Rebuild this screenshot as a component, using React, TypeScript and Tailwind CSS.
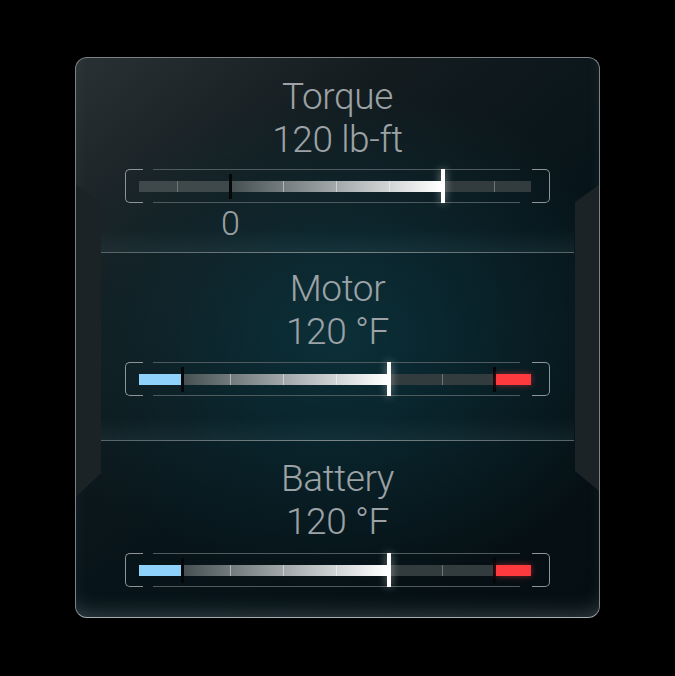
import React from 'react';

type Gauge = {
  title: string;
  reading: string;
  kind: 'torque' | 'temp';
  // positions in px along the 392px track
  zero?: number;
  low?: number;
  high?: number;
  value: number;
};

const TRACK_W = 392;
const TICKS = [38, 91, 144, 197, 250, 303, 355];

const GAUGES: Gauge[] = [
  { title: 'Torque', reading: '120 lb-ft', kind: 'torque', zero: 90, value: 302 },
  { title: 'Motor', reading: '120 °F', kind: 'temp', low: 42, high: 354, value: 248 },
  { title: 'Battery', reading: '120 °F', kind: 'temp', low: 42, high: 354, value: 248 },
];

const font = { fontFamily: 'Roboto, "Liberation Sans", sans-serif' };

const BlackMark = () => <div className="h-[25px] w-[3px] shrink-0 bg-[#050708]" />;
const WhiteMark = () => (
  <div className="z-10 h-[34px] w-[4px] shrink-0 bg-white shadow-[0_0_8px_rgba(255,255,255,0.55)]" />
);

const Bar: React.FC<{ g: Gauge }> = ({ g }) => {
  const isTorque = g.kind === 'torque';
  const start = isTorque ? g.zero! : g.low!;
  const fillW = g.value - start - 3;
  const restW = (isTorque ? TRACK_W : g.high!) - g.value - 4;

  return (
    <div className="relative mx-auto w-[425px]">
      {/* bracket frame */}
      <div className="absolute left-0 top-0 h-[34px] w-[18px] rounded-l-[5px] border border-r-0 border-[#8e9497]" />
      <div className="absolute right-0 top-0 h-[34px] w-[18px] rounded-r-[5px] border border-l-0 border-[#8e9497]" />
      <div className="absolute left-[28px] right-[30px] top-0 h-px bg-[#4e5a5d]" />
      <div className="absolute left-[28px] right-[30px] top-[33px] h-px bg-[#4e5a5d]" />

      <div className="relative ml-[14px] flex h-[34px] w-[392px] items-center">
        {isTorque ? (
          <div className="h-[11px] shrink-0 bg-[#3f494c]" style={{ width: g.zero }} />
        ) : (
          <div className="h-[11px] shrink-0 bg-[#8fd2fc]" style={{ width: g.low }} />
        )}
        <BlackMark />
        <div
          className="h-[11px] shrink-0 bg-[linear-gradient(90deg,#465053_0%,#9aa1a3_45%,#ffffff_100%)]"
          style={{ width: fillW }}
        />
        <WhiteMark />
        <div className="h-[11px] shrink-0 bg-[#323c3f]" style={{ width: restW }} />
        {!isTorque && (
          <>
            <BlackMark />
            <div className="h-[11px] flex-1 bg-[#ff3a3e] shadow-[0_0_6px_rgba(255,58,62,0.5)]" />
          </>
        )}

        {/* tick marks drawn over the track */}
        {TICKS.filter((t) => t > start + 3 && (isTorque || t < g.high!) && Math.abs(t - g.value) > 3).map((t) => (
          <div
            key={t}
            className={`absolute top-[11.5px] h-[11px] w-px ${t < g.value ? 'bg-white/45' : 'bg-[#6c7679]'}`}
            style={{ left: t }}
          />
        ))}
        {isTorque && (
          <div className="absolute top-[11.5px] h-[11px] w-px bg-[#6c7679]" style={{ left: TICKS[0] }} />
        )}
      </div>

      {isTorque && (
        <div className="flex" style={{ paddingLeft: 14 + g.zero! - 10 }}>
          <div className="w-[23px] pt-[3px] text-center text-[34px] font-light leading-[34px] text-[#9aa0a3]" style={font}>
            0
          </div>
        </div>
      )}
    </div>
  );
};

const Section: React.FC<{ g: Gauge; className: string; barGap: string }> = ({ g, className, barGap }) => (
  <div className={`flex flex-col items-center ${className}`}>
    <div className="text-[37px] font-light leading-[43px] tracking-[-0.4px] text-[#9ca2a5]" style={font}>
      {g.title}
    </div>
    <div className="text-[37px] font-light leading-[43px] tracking-[-0.4px] text-[#9ca2a5]" style={font}>
      {g.reading}
    </div>
    <div className={`w-full ${barGap}`}>
      <Bar g={g} />
    </div>
  </div>
);

const Divider: React.FC = () => (
  <div className="mx-[25px] flex flex-col">
    <div className="-mt-[22px] h-[22px] bg-[linear-gradient(180deg,rgba(120,160,170,0)_0%,rgba(120,160,170,0.09)_100%)]" />
    <div className="h-px bg-[linear-gradient(90deg,#566367_0%,#7a8689_50%,#566367_100%)]" />
  </div>
);

const App: React.FC = () => {
  return (
    <div className="h-[676px] w-[675px] bg-black pl-[75px] pt-[57px]">
      <div className="relative h-[561px] w-[525px] overflow-hidden rounded-[12px] border border-[#7c8285] border-b-[#a8adb0] bg-[radial-gradient(ellipse_60%_45%_at_50%_50%,rgba(12,52,62,0.85)_0%,rgba(6,26,32,0)_100%),linear-gradient(140deg,#2a3134_0%,#141c1f_26%,#071419_55%,#050e12_100%)] shadow-[inset_0_-14px_22px_-12px_rgba(170,190,195,0.3)]">
        {/* side fins */}
        <div className="absolute left-0 top-[127px] h-[312px] w-[25px] bg-[#1b2326] [clip-path:polygon(0_0,100%_18px,100%_288px,0_100%)]" />
        <div className="absolute right-0 top-[127px] h-[306px] w-[24px] bg-[#1b2326] [clip-path:polygon(0_17px,100%_0,100%_100%,0_286px)]" />

        <div className="relative flex flex-col">
          <Section g={GAUGES[0]} className="h-[194px] pt-[17px]" barGap="mt-[8px]" />
          <Divider />
          <Section g={GAUGES[1]} className="h-[187px] pt-[14px]" barGap="mt-[9px]" />
          <Divider />
          <Section g={GAUGES[2]} className="h-[175px] pt-[16px]" barGap="mt-[10px]" />
        </div>
      </div>
    </div>
  );
};

export default App;
